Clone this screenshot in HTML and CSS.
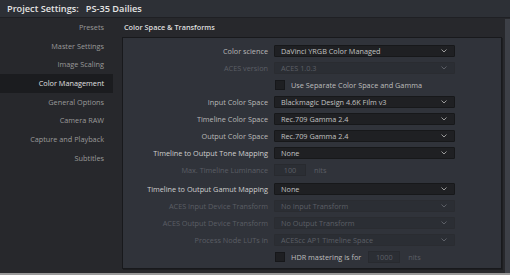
FILE: index.html
```html
<!DOCTYPE html>
<html lang="en">
<head>
	<meta charset="UTF-8">
	<title>Project Settings</title>
	<link rel="stylesheet" href="styles.css">
</head>
<body>
<div class="win">
	<div class="hdr">Project Settings:<span class="proj">PS-35 Dailies</span></div>
	<div class="body">
		<div class="side">
			<div class="nav">Presets</div>
			<div class="nav">Master Settings</div>
			<div class="nav">Image Scaling</div>
			<div class="nav sel">Color Management</div>
			<div class="nav">General Options</div>
			<div class="nav">Camera RAW</div>
			<div class="nav">Capture and Playback</div>
			<div class="nav">Subtitles</div>
		</div>
		<div class="main">
			<div class="ttl">Color Space &amp; Transforms</div>
			<div class="panel">
				<div class="row">
					<div class="lbl">Color science</div>
					<div class="dd">DaVinci YRGB Color Managed<svg class="chev" viewBox="0 0 6 4"><polyline points="0.5,0.5 3,3 5.5,0.5"/></svg></div>
				</div>
				<div class="row off">
					<div class="lbl">ACES version</div>
					<div class="dd">ACES 1.0.3<svg class="chev" viewBox="0 0 6 4"><polyline points="0.5,0.5 3,3 5.5,0.5"/></svg></div>
				</div>
				<div class="row">
					<div class="lbl"></div>
					<div class="chk"><span class="box"></span>Use Separate Color Space and Gamma</div>
				</div>
				<div class="row">
					<div class="lbl">Input Color Space</div>
					<div class="dd">Blackmagic Design 4.6K Film v3<svg class="chev" viewBox="0 0 6 4"><polyline points="0.5,0.5 3,3 5.5,0.5"/></svg></div>
				</div>
				<div class="row">
					<div class="lbl">Timeline Color Space</div>
					<div class="dd">Rec.709 Gamma 2.4<svg class="chev" viewBox="0 0 6 4"><polyline points="0.5,0.5 3,3 5.5,0.5"/></svg></div>
				</div>
				<div class="row">
					<div class="lbl">Output Color Space</div>
					<div class="dd">Rec.709 Gamma 2.4<svg class="chev" viewBox="0 0 6 4"><polyline points="0.5,0.5 3,3 5.5,0.5"/></svg></div>
				</div>
				<div class="row">
					<div class="lbl hi">Timeline to Output Tone Mapping</div>
					<div class="dd">None<svg class="chev" viewBox="0 0 6 4"><polyline points="0.5,0.5 3,3 5.5,0.5"/></svg></div>
				</div>
				<div class="row off gap">
					<div class="lbl">Max. Timeline Luminance</div>
					<div class="fld"><span class="num">100</span><span class="unit">nits</span></div>
				</div>
				<div class="row">
					<div class="lbl hi">Timeline to Output Gamut Mapping</div>
					<div class="dd">None<svg class="chev" viewBox="0 0 6 4"><polyline points="0.5,0.5 3,3 5.5,0.5"/></svg></div>
				</div>
				<div class="row off">
					<div class="lbl">ACES Input Device Transform</div>
					<div class="dd">No Input Transform<svg class="chev" viewBox="0 0 6 4"><polyline points="0.5,0.5 3,3 5.5,0.5"/></svg></div>
				</div>
				<div class="row off">
					<div class="lbl">ACES Output Device Transform</div>
					<div class="dd">No Output Transform<svg class="chev" viewBox="0 0 6 4"><polyline points="0.5,0.5 3,3 5.5,0.5"/></svg></div>
				</div>
				<div class="row off">
					<div class="lbl">Process Node LUTs in</div>
					<div class="dd">ACEScc AP1 Timeline Space<svg class="chev" viewBox="0 0 6 4"><polyline points="0.5,0.5 3,3 5.5,0.5"/></svg></div>
				</div>
				<div class="row">
					<div class="lbl"></div>
					<div class="chk"><span class="box"></span>HDR mastering is for<span class="num dim">1000</span><span class="unit">nits</span></div>
				</div>
			</div>
		</div>
		<div class="scroll"></div>
	</div>
	<div class="foot"></div>
</div>
</body>
</html>
```

FILE: styles.css
```css
*{box-sizing:border-box;margin:0;padding:0;}
*{font-family:"Open Sans","Noto Sans",sans-serif;}
body{background-color:#27282c;font-size:7.3px;color:#c4c4c4;}
.win{width:510px;height:275px;display:flex;flex-direction:column;}
.hdr{height:18px;background-color:#2d3036;border-bottom:1px solid #1f2024;padding:0 7px;font-size:9.2px;font-weight:600;color:#e4e4e4;line-height:17px;}
.proj{margin-left:7px;}
.body{flex:1;display:flex;min-height:0;}
.side{width:113px;}
.nav{height:18.7px;line-height:18.7px;text-align:right;padding-right:9px;color:#9a9a9a;}
.nav.sel{background-color:#1b1c1f;color:#e0e0e0;}
.main{flex:1;padding-left:9px;padding-right:3px;display:flex;flex-direction:column;}
.ttl{height:19px;line-height:19px;padding-left:2px;font-weight:600;color:#dedede;}
.panel{height:232px;background-color:#30333a;border:1px solid #18191c;box-shadow:1px 1px 0 #1d1e21;padding-top:7px;display:flex;flex-direction:column;gap:5px;}
.row{height:12px;display:flex;align-items:center;gap:6px;}
.row.gap{margin-bottom:2px;}
.lbl{width:145px;text-align:right;color:#b8b8b8;white-space:nowrap;}
.lbl.hi{color:#cfcfcf;}
.dd{width:181px;height:12px;background-color:#1f2023;border:1px solid #17181a;border-radius:1px;padding-left:6px;display:flex;align-items:center;color:#c2c2c2;white-space:nowrap;}
.chev{width:6px;height:4px;margin-left:auto;margin-right:7px;fill:none;stroke:#9a9a9a;stroke-width:1;}
.off .lbl{color:#5b5e65;}
.off .dd{background-color:#2b2e34;border-color:#2a2c31;color:#5c5f66;}
.off .chev{stroke:#5c5f66;}
.chk{display:flex;align-items:center;color:#bdbdbd;white-space:nowrap;}
.box{width:10px;height:10px;background-color:#1e1f22;border:1px solid #16171a;margin-right:6px;margin-left:1px;}
.fld{display:flex;align-items:center;}
.num{width:32px;height:12px;background-color:#2b2e34;border:1px solid #282a2f;text-align:center;line-height:10px;color:#5c5f66;}
.chk .num{margin-left:7px;}
.unit{margin-left:8px;color:#5c5f66;}
.scroll{width:5px;margin-top:1px;background-color:#3d4047;}
.foot{height:2px;background-color:#9a9a9a;}
```
